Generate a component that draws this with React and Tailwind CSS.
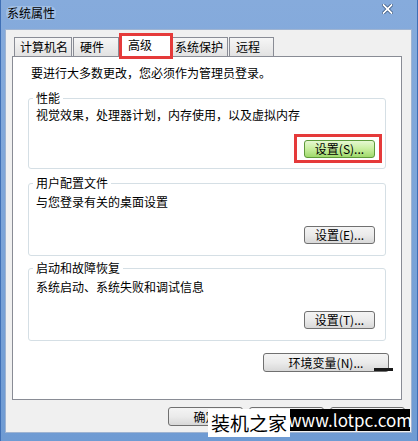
const font = "font-['Noto_Sans_CJK_SC','Liberation_Sans',sans-serif]";

function Btn({ children, className = "", green = false }) {
  return (
    <div
      className={`flex items-center justify-center rounded-[3px] border text-[12px] leading-[14px] text-black ${
        green
          ? "border-[#5e9a3a] bg-gradient-to-b from-[#e6f8d2] via-[#c8ee9e] to-[#9fd96b]"
          : "border-[#707070] bg-gradient-to-b from-[#f4f4f4] via-[#ebebeb] to-[#d8d8d8]"
      } ${className}`}
    >
      {children}
    </div>
  );
}

function Group({ title, text, btn, h, pt, mb, highlight }) {
  return (
    <div
      className={`relative mx-[15px] flex flex-col rounded-[3px] border border-[#d5dfe5] ${h}`}
    >
      <span className="absolute -top-[8px] left-[4px] bg-white px-[3px] text-[12px] leading-[14px]">
        {title}
      </span>
      <div className={`pl-[7px] text-[12px] leading-[14px] ${pt}`}>{text}</div>
      <div className={`mt-auto flex justify-end pr-[10px] ${mb}`}>
        <div className="relative">
          {highlight && (
            <div className="absolute -top-[6px] -bottom-[5px] -left-[10px] -right-[7px] border-[3px] border-[#e53a3a]" />
          )}
          <Btn green={highlight} className="relative h-[18px] w-[71px]">
            {btn}
          </Btn>
        </div>
      </div>
    </div>
  );
}

export default function App() {
  const tabs = [
    { label: "计算机名", w: "w-[58px]", pl: "pl-[5px]" },
    { label: "硬件", w: "w-[46px]", pl: "pl-[6px]" },
    { label: "高级", w: "w-[50px]", pl: "pl-[6px]", active: true },
    { label: "系统保护", w: "w-[56px]", pl: "pl-[2px]" },
    { label: "远程", w: "w-[45px]", pl: "pl-[6px]" },
  ];

  return (
    <div
      className={`${font} relative flex h-[441px] w-[418px] flex-col overflow-hidden border-x border-[#3f6fb5] bg-gradient-to-b from-[#86abdc] via-[#7ca4d8] to-[#6f9bd3] text-black`}
    >
      {/* title bar */}
      <div className="flex h-[29px] items-start justify-between pl-[5px] pr-[24px] pt-[6px]">
        <span className="rounded-[6px] bg-[#c9dbf1]/40 px-[1px] text-[12px] leading-[14px] text-black">
          系统属性
        </span>
        <svg width="11" height="10" viewBox="0 0 11 10" className="mt-[-2px]">
          <path d="M1.5 1 L9.5 9 M9.5 1 L1.5 9" stroke="#2b4a74" strokeWidth="3.2" strokeLinecap="square" />
          <path d="M1.5 1 L9.5 9 M9.5 1 L1.5 9" stroke="#ffffff" strokeWidth="1.8" strokeLinecap="square" />
        </svg>
      </div>

      {/* client area */}
      <div className="ml-[4px] mr-[5px] flex h-[404px] flex-col border border-[#9fb4d2] bg-[#f0f0f0]">
        {/* tab strip */}
        <div className="flex h-[26px] items-end pl-[8px]">
          {tabs.map((t) =>
            t.active ? (
              <div
                key={t.label}
                className={`relative z-10 -mb-px ml-[1px] mr-[1px] h-[22px] ${t.w} border border-b-0 border-[#898c95] bg-white ${t.pl} pt-[2px] text-[12px] leading-[14px]`}
              >
                {t.label}
                <div className="absolute -left-[3px] -right-[3px] -top-[3px] h-[26px] border-[3px] border-[#e53a3a]" />
              </div>
            ) : (
              <div
                key={t.label}
                className={`mr-[1px] h-[19px] ${t.w} border border-b-0 border-[#898c95] bg-gradient-to-b from-[#f6f6f6] to-[#e2e2e2] ${t.pl} pt-[2px] text-[12px] leading-[14px] whitespace-nowrap`}
              >
                {t.label}
              </div>
            )
          )}
        </div>

        {/* tab page */}
        <div className="ml-[6px] flex h-[344px] w-[390px] flex-col border border-[#898c95] bg-white">
          <div className="mt-[9px] pl-[18px] text-[12px] leading-[14px]">
            要进行大多数更改，您必须作为管理员登录。
          </div>
          <div className="mt-[18px]">
            <Group
              title="性能"
              text="视觉效果，处理器计划，内存使用，以及虚拟内存"
              btn="设置(S)..."
              h="h-[71px]"
              pt="pt-[9px]"
              mb="mb-[10px]"
              highlight
            />
          </div>
          <div className="mt-[14px]">
            <Group
              title="用户配置文件"
              text="与您登录有关的桌面设置"
              btn="设置(E)..."
              h="h-[73px]"
              pt="pt-[11px]"
              mb="mb-[11px]"
            />
          </div>
          <div className="mt-[12px]">
            <Group
              title="启动和故障恢复"
              text="系统启动、系统失败和调试信息"
              btn="设置(T)..."
              h="h-[73px]"
              pt="pt-[11px]"
              mb="mb-[11px]"
            />
          </div>
          <div className="mt-[12px] flex justify-end pr-[12px]">
            <div className="relative">
              <Btn className="h-[19px] w-[126px]">环境变量(N)...</Btn>
              <div className="absolute -right-[4px] top-[15px] h-[3px] w-[19px] bg-[#1a1a1a]" />
            </div>
          </div>
        </div>

        {/* dialog buttons */}
        <div className="mt-[7px] flex gap-[6px] pl-[162px]">
          <Btn className="h-[19px] w-[75px]">确定</Btn>
          <Btn className="h-[19px] w-[75px]">取消</Btn>
          <Btn className="h-[19px] w-[75px]">应用(A)</Btn>
        </div>
      </div>

      {/* watermark */}
      <div className="absolute left-[207px] top-[409px] flex items-start">
        <div className="flex h-[28px] w-[82px] items-center justify-center bg-white text-[19px] leading-[22px] text-black">
          装机之家
        </div>
        <div className="flex h-[22px] w-[120px] items-center justify-center bg-black text-[17px] leading-[20px] text-white">
          www.lotpc.com
        </div>
      </div>
    </div>
  );
}
